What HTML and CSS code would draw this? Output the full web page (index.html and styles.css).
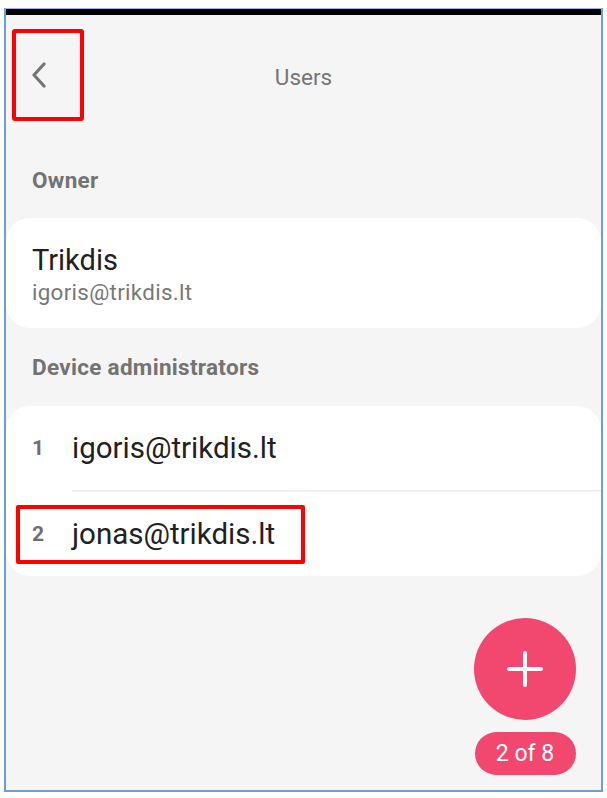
FILE: index.html
```html
<!DOCTYPE html>
<html>
<head>
<meta charset="utf-8">
<link rel="stylesheet" href="styles.css">
</head>
<body>
<div class="frame">
  <div class="statusbar"></div>
  <div class="screen">
    <header class="header">
      <button class="back">
        <svg width="18" height="26" viewBox="0 0 18 26"><path d="M14 2 L4 13 L14 24" fill="none" stroke="#757575" stroke-width="3.2" stroke-linecap="round" stroke-linejoin="round"/></svg>
      </button>
      <h1 class="title">Users</h1>
    </header>

    <div class="section-label owner-label">Owner</div>
    <div class="card owner-card">
      <div class="owner-name">Trikdis</div>
      <div class="owner-email">igoris@trikdis.lt</div>
    </div>

    <div class="section-label admin-label">Device administrators</div>
    <div class="card admin-card">
      <div class="row">
        <span class="num">1</span>
        <span class="email">igoris@trikdis.lt</span>
      </div>
      <div class="divider"></div>
      <div class="row">
        <div class="highlight"></div>
        <span class="num">2</span>
        <span class="email">jonas@trikdis.lt</span>
      </div>
    </div>

    <div class="fab-area">
      <button class="fab">
        <svg width="36" height="36" viewBox="0 0 36 36"><path d="M18 2 V34 M2 18 H34" stroke="#fff" stroke-width="4" stroke-linecap="round"/></svg>
      </button>
      <div class="pill">2 of 8</div>
    </div>
  </div>
</div>
</body>
</html>
```
FILE: styles.css
```css
* { box-sizing: border-box; }
html, body { margin: 0; padding: 0; background: #fff; }
body { font-family: Roboto, "Noto Sans", sans-serif; }

.frame {
  margin: 8px 0 0 4px;
  width: 599px;
  height: 784px;
  border: 2px solid #6c9fd6;
  border-top: 1px solid #9ab9de;
  display: flex;
  flex-direction: column;
  background: #f5f5f5;
}
.statusbar { height: 6px; background: #000; flex: none; }
.screen { flex: 1; display: flex; flex-direction: column; position: relative; }

.header {
  height: 112px;
  display: flex;
  align-items: center;
  position: relative;
  padding-left: 6px;
}
.back {
  width: 72px;
  height: 92px;
  border: 4px solid #ff0000;
  border-radius: 3px;
  background: transparent;
  display: flex;
  align-items: center;
  padding: 0 0 0 14px;
  margin-top: 7px;
}
.title {
  position: absolute;
  left: 0; right: 0;
  top: 49px;
  margin: 0;
  text-align: center;
  font-weight: 400;
  font-size: 22.5px;
  line-height: 26px;
  color: #767676;
  pointer-events: none;
}

.section-label {
  font-weight: 700;
  font-size: 22.5px;
  line-height: 24px;
  letter-spacing: 0.3px;
  color: #737373;
  padding-left: 26px;
}
.owner-label { margin-top: 41px; }
.admin-label { margin-top: 27px; }

.card {
  background: #fff;
  border-radius: 24px;
}
.owner-card {
  margin-top: 26px;
  height: 110px;
  padding: 25px 0 0 26px;
}
.owner-name { font-size: 29px; color: #212121; line-height: 34px; }
.owner-email { font-size: 22.4px; color: #777; line-height: 26px; margin-top: 2px; letter-spacing: 0.3px; }

.admin-card {
  margin-top: 27px;
  height: 170px;
}
.row {
  height: 84px;
  display: flex;
  align-items: center;
  position: relative;
}
.num {
  width: 66px;
  padding-left: 26px;
  font-weight: 700;
  font-size: 21px;
  color: #6f6f6f;
}
.email { font-size: 29.5px; color: #212121; }
.divider { height: 2px; background: #f0f0f0; margin-left: 66px; }
.highlight {
  position: absolute;
  left: 10px;
  top: 13px;
  width: 289px;
  height: 59px;
  border: 4px solid #ff0000;
  border-radius: 2px;
}

.fab-area {
  position: absolute;
  right: 25px;
  bottom: 15px;
  display: flex;
  flex-direction: column;
  align-items: center;
  gap: 12px;
}
.fab {
  width: 102px;
  height: 102px;
  border-radius: 50%;
  border: none;
  background: #f2476f;
  display: flex;
  align-items: center;
  justify-content: center;
  padding: 0;
}
.pill {
  width: 101px;
  height: 43px;
  border-radius: 22px;
  background: #f2476f;
  color: #fff;
  font-size: 23px;
  display: flex;
  align-items: center;
  justify-content: center;
}
```
